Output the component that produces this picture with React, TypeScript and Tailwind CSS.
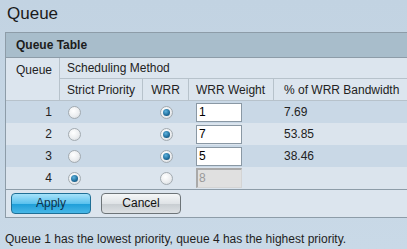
import React from "react";

const Radio = ({ checked }: { checked: boolean }) => (
  <span className="inline-flex items-center justify-center w-[13px] h-[13px] rounded-full border border-[#a3abb1] bg-[radial-gradient(circle_at_40%_35%,#ffffff,#eceef0_55%,#d0d4d8)]">
    {checked && (
      <span className="block w-[7px] h-[7px] rounded-full bg-[radial-gradient(circle_at_40%_35%,#5fb4e0,#1e6b99_60%,#0d3f63)]" />
    )}
  </span>
);

const rows = [
  { q: 1, sp: false, w: "1", bw: "7.69" },
  { q: 2, sp: false, w: "7", bw: "53.85" },
  { q: 3, sp: false, w: "5", bw: "38.46" },
  { q: 4, sp: true, w: "8", bw: "" },
];

export default function App() {
  return (
    <div
      className="w-[407px] h-[249px] overflow-hidden bg-[linear-gradient(180deg,#c2d3e2,#c9d9e7)] text-[12px] text-[#222]"
      style={{ fontFamily: '"Liberation Sans", Arial, sans-serif' }}
    >
      <div className="h-[32px] pl-[7px] pt-[2px] text-[17px] leading-[24px] text-[#1a1a1a]">Queue</div>
      <div className="ml-[5px] w-[420px] border-l border-t border-b border-[#8d9ca8] bg-[#dce5ee]">
        <div className="h-[25px] bg-[#a8bdcb] border-b border-[#8d9ca8] pl-[10px] flex items-center font-bold text-[#1c1c1c]">
          Queue Table
        </div>
        <div className="grid grid-cols-[54px_83px_46px_85px_1fr]">
          <div className="row-span-2 border-r border-[#b7c2cb] pl-[10px] pt-[3px] h-[43px] border-b">Queue</div>
          <div className="col-span-4 h-[21px] border-b border-[#b7c2cb] pl-[7px] flex items-center">Scheduling Method</div>
          <div className="h-[22px] border-r border-b border-[#b7c2cb] flex items-center pl-[7px]">Strict Priority</div>
          <div className="h-[22px] border-r border-b border-[#b7c2cb] flex items-center justify-center">WRR</div>
          <div className="h-[22px] border-r border-b border-[#b7c2cb] flex items-center pl-[7px]">WRR Weight</div>
          <div className="h-[22px] border-b border-[#b7c2cb] flex items-center pl-[10px]">% of WRR Bandwidth</div>
        </div>
        {rows.map((r, i) => (
          <div
            key={r.q}
            className={`grid grid-cols-[54px_83px_46px_85px_1fr] h-[22px] items-center ${
              i % 2 === 0 ? "bg-[#c9d8e6]" : "bg-[#dbe4ed]"
            }`}
          >
            <div className="text-right pr-[8px]">{r.q}</div>
            <div className="pl-[8px] flex items-center">
              <Radio checked={r.sp} />
            </div>
            <div className="flex items-center justify-center">
              <Radio checked={!r.sp} />
            </div>
            <div className="pl-[7px] flex items-center">
              {r.sp ? (
                <div className="w-[46px] h-[20px] bg-[#e0e0e0] border-t-2 border-l-2 border-[#a9a9a9] border-r border-b border-r-[#d4d4d4] border-b-[#d4d4d4] pl-[1px] leading-[16px] text-[#9a9a9a]">
                  {r.w}
                </div>
              ) : (
                <div className="w-[46px] h-[19px] bg-white border border-[#8a98a4] pl-[2px] leading-[17px] text-black">
                  {r.w}
                </div>
              )}
            </div>
            <div className="pl-[10px]">{r.bw}</div>
          </div>
        ))}
        <div className="border-t border-[#8d9ca8] h-[28px] flex items-center gap-[10px] pl-[5px]">
          <button className="w-[80px] h-[21px] rounded-[4px] border border-[#1f6f96] bg-[linear-gradient(180deg,#a6e2fa,#5cc2ee_50%,#1f9fd9_55%,#48b7e7)] text-[12px] text-[#10324a] leading-[19px]">
            Apply
          </button>
          <button className="w-[80px] h-[21px] rounded-[4px] border border-[#6d7478] bg-[linear-gradient(180deg,#f5f7f8,#dfe3e6_50%,#c9ced2_55%,#dde1e4)] text-[12px] text-[#111] leading-[19px]">
            Cancel
          </button>
        </div>
      </div>
      <div className="pl-[5px] mt-[12px] text-[#1e1e1e]">
        Queue 1 has the lowest priority, queue 4 has the highest priority.
      </div>
    </div>
  );
}
